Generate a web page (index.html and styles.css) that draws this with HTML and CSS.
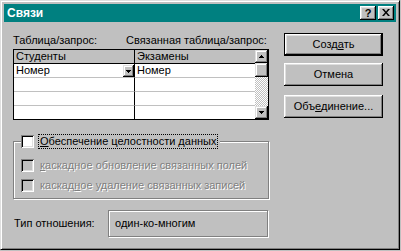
FILE: index.html
```html
<!DOCTYPE html>
<html lang="ru">
  <head>
    <meta charset="UTF-8">
    <title>Связи</title>
    <link rel="stylesheet" href="styles.css">
  </head>
  <body>
    <div class="window">
      <div class="titlebar">
        <span class="title">Связи</span>
        <button type="button" class="cap">?</button>
        <button type="button" class="cap close">
          <svg width="8" height="7" viewBox="0 0 8 7"><path d="M0 0h2l2 2.5L6 0h2L5 3.5 8 7H6L4 4.5 2 7H0l3-3.5z"/></svg>
        </button>
      </div>

      <div class="content">
        <div class="left">
          <div class="labels">
            <span class="lbl-main">Таблица/запрос:</span>
            <span>Связанная таблица/запрос:</span>
          </div>

          <div class="grid">
            <div class="cols">
              <div class="cell hd sep">Студенты</div>
              <div class="cell hd">Экзамены</div>
              <div class="cell sep combo">
                <span class="txt">Номер</span>
                <span class="drop"><svg width="5" height="3" viewBox="0 0 5 3"><path d="M0 0h5v1H4v1H3v1H2V2H1V1H0z"/></svg></span>
              </div>
              <div class="cell">Номер</div>
              <div class="cell sep"></div>
              <div class="cell"></div>
              <div class="cell sep"></div>
              <div class="cell"></div>
              <div class="cell sep last"></div>
              <div class="cell last"></div>
            </div>
            <div class="vscroll">
              <span class="sbtn"><svg width="5" height="3" viewBox="0 0 5 3"><path d="M2 0h1v1h1v1h1v1H0V2h1V1h1z"/></svg></span>
              <span class="sbtn thumb"></span>
              <span class="track"></span>
              <span class="sbtn"><svg width="5" height="3" viewBox="0 0 5 3"><path d="M0 0h5v1H4v1H3v1H2V2H1V1H0z"/></svg></span>
            </div>
          </div>

          <fieldset class="group">
            <legend>
              <span class="cb"></span>
              <span class="focus"><u>О</u>беспечение целостности данных</span>
            </legend>
            <div class="row">
              <span class="cb off"></span>
              <span class="dis"><u>к</u>аскадное обновление связанных полей</span>
            </div>
            <div class="row">
              <span class="cb off"></span>
              <span class="dis">каскад<u>н</u>ое удаление связанных записей</span>
            </div>
          </fieldset>

          <div class="reltype">
            <span class="rel-lbl">Тип отношения:</span>
            <div class="field">один-ко-многим</div>
          </div>
        </div>

        <div class="right">
          <button type="button" class="btn default">Созд<u>а</u>ть</button>
          <button type="button" class="btn cancel">Отмена</button>
          <button type="button" class="btn join">Объ<u>е</u>динение...</button>
        </div>
      </div>
    </div>
  </body>
</html>
```

FILE: styles.css
```css
* {
  box-sizing: border-box;
}
html, body {
  margin: 0;
}
body {
  width: 401px;
  height: 251px;
  overflow: hidden;
  background: #c0c0c0;
  color: #000;
  font: 11px/13px "Liberation Sans", Arial, sans-serif;
}
u {
  text-decoration-thickness: 1px;
  text-underline-offset: 1px;
}

/* window frame */
.window {
  width: 400px;
  height: 250px;
  padding: 3px;
  border: 1px solid;
  border-color: #dfdfdf #000 #000 #dfdfdf;
  box-shadow: inset 1px 1px #fff, inset -1px -1px #808080;
  display: flex;
  flex-direction: column;
}
.titlebar {
  height: 18px;
  background: #008080;
  display: flex;
  align-items: center;
  gap: 2px;
  padding: 0 2px 0 3px;
}
.title {
  flex: 1;
  color: #fff;
  font-weight: bold;
  font-size: 12px;
}
.cap {
  width: 16px;
  height: 14px;
  padding: 0;
  border: 0;
  background: #c0c0c0;
  box-shadow: inset -1px -1px #000, inset 1px 1px #fff, inset -2px -2px #808080, inset 2px 2px #dfdfdf;
  display: flex;
  align-items: center;
  justify-content: center;
  font: bold 11px/1 "Liberation Sans", Arial, sans-serif;
  color: #000;
}
.close svg {
  margin-top: -1px;
}

/* body */
.content {
  flex: 1;
  display: flex;
  gap: 15px;
  padding-left: 9px;
}
.left {
  width: 256px;
  display: flex;
  flex-direction: column;
}
.labels {
  margin-top: 12px;
  display: flex;
}
.lbl-main {
  width: 113px;
}

/* field grid */
.grid {
  margin-top: 2px;
  height: 71px;
  display: flex;
  border: 1px solid #000;
  background: #fff;
}
.cols {
  display: grid;
  grid-template-columns: 121px 120px;
  grid-template-rows: repeat(4, 14px) 13px;
}
.cell {
  padding-left: 2px;
  border-bottom: 1px solid #c0c0c0;
  white-space: nowrap;
  overflow: hidden;
}
.cell.sep {
  border-right: 1px solid #000;
}
.cell.hd {
  background: #c0c0c0;
  border-bottom-color: #000;
}
.cell.last {
  border-bottom: 0;
}
.combo {
  display: flex;
}
.combo .txt {
  flex: 1;
}
.drop {
  width: 11px;
  margin-top: 1px;
  background: #c0c0c0;
  box-shadow: inset -1px -1px #000, inset 1px 1px #dfdfdf, inset -2px -2px #808080, inset 2px 2px #fff;
  display: flex;
  align-items: center;
  justify-content: center;
}
.vscroll {
  width: 13px;
  display: flex;
  flex-direction: column;
}
.sbtn {
  height: 13px;
  background: #c0c0c0;
  box-shadow: inset -1px -1px #000, inset 1px 1px #dfdfdf, inset -2px -2px #808080, inset 2px 2px #fff;
  display: flex;
  align-items: center;
  justify-content: center;
}
.sbtn.thumb {
  height: 14px;
}
.track {
  flex: 1;
  background: repeating-conic-gradient(#c0c0c0 0 25%, #fff 0 50%) 0 0 / 2px 2px;
}

/* referential integrity group */
.group {
  margin: 14px 0 0;
  padding: 6px 0 3px 7px;
  min-width: 0;
  border: 1px solid #808080;
  box-shadow: inset 1px 1px #fff, 1px 1px #fff;
}
.group legend {
  display: flex;
  align-items: center;
  padding: 0 2px 0 0;
  background: #c0c0c0;
}
.cb {
  width: 13px;
  height: 13px;
  flex: none;
  background: #fff;
  box-shadow: inset 1px 1px #808080, inset -1px -1px #fff, inset 2px 2px #000, inset -2px -2px #dfdfdf;
}
.cb.off {
  background: #c0c0c0;
}
.focus {
  margin-left: 4px;
  padding: 0 1px;
  border: 1px dotted #000;
}
.row {
  height: 20px;
  display: flex;
  align-items: center;
  gap: 6px;
}
.dis {
  color: #808080;
  text-shadow: 1px 1px #fff;
}

/* relationship type */
.reltype {
  margin-top: 11px;
  display: flex;
  align-items: center;
}
.rel-lbl {
  width: 94px;
  margin-left: 1px;
}
.field {
  width: 160px;
  height: 27px;
  padding-left: 6px;
  border: 1px solid #808080;
  box-shadow: inset 1px 1px #fff, 1px 1px #fff;
  display: flex;
  align-items: center;
}

/* command buttons */
.right {
  width: 99px;
  padding-top: 11px;
  display: flex;
  flex-direction: column;
}
.btn {
  height: 23px;
  padding: 0;
  border: 0;
  background: #c0c0c0;
  box-shadow: inset -1px -1px #000, inset 1px 1px #fff, inset -2px -2px #808080, inset 2px 2px #dfdfdf;
  font: 11px/13px "Liberation Sans", Arial, sans-serif;
  color: #000;
}
.btn.default {
  border: 1px solid #000;
}
.cancel {
  margin-top: 7px;
}
.join {
  margin-top: 9px;
}
```
